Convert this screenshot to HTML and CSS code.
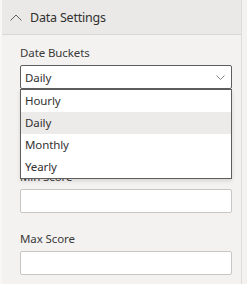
FILE: index.html
```html
<!DOCTYPE html>
<html>
<head>
    <title>Data Settings</title>
    <link rel="stylesheet" href="styles.css">
</head>
<body>
    <div class="panel">
        <div class="panel-header">
            <svg class="chevron-up" width="12" height="7" viewBox="0 0 12 7">
                <path d="M0.5 6.5 L6 1 L11.5 6.5" fill="none" stroke="#605e5c" stroke-width="1"/>
            </svg>
            <span class="panel-title">Data Settings</span>
        </div>
        <div class="panel-body">
            <div class="field">
                <label class="field-label">Date Buckets</label>
                <div class="select">
                    <span>Daily</span>
                    <svg class="chevron-down" width="9" height="5" viewBox="0 0 9 5">
                        <path d="M0.5 0.5 L4.5 4.5 L8.5 0.5" fill="none" stroke="#8a8886" stroke-width="1"/>
                    </svg>
                    <ul class="dropdown">
                        <li>Hourly</li>
                        <li class="selected">Daily</li>
                        <li>Monthly</li>
                        <li>Yearly</li>
                    </ul>
                </div>
            </div>
            <div class="field field-spaced">
                <label class="field-label">Min Score</label>
                <input type="text" class="text-input">
            </div>
            <div class="field">
                <label class="field-label">Max Score</label>
                <input type="text" class="text-input">
            </div>
        </div>
    </div>
</body>
</html>
```
FILE: styles.css
```css
body {
    margin: 0;
    background-color: #f3f2f1;
    font-family: "Segoe UI", "Noto Sans", sans-serif;
    color: #323130;
}
.panel {
    width: 242px;
    height: 284px;
    border-left: 2px solid #f8f7f6;
    border-right: 1px solid #dedcda;
    box-sizing: border-box;
}
.panel-header {
    height: 35px;
    background-color: #eae9e7;
    border-bottom: 1px solid #dad8d6;
    box-sizing: border-box;
    display: flex;
    align-items: center;
    padding-left: 8px;
}
.chevron-up {
    margin-right: 8px;
    margin-top: 1px;
}
.panel-title {
    font-size: 12.5px;
    letter-spacing: -0.2px;
    color: #323130;
}
.panel-body {
    padding: 6px 9px 0 18px;
}
.field {
    margin-bottom: 14px;
}
.field-spaced {
    margin-top: 76px;
}
.field-label {
    display: block;
    height: 24px;
    line-height: 24px;
    font-size: 11.5px;
    letter-spacing: -0.1px;
    color: #3b3a39;
}
.select {
    position: relative;
    height: 24px;
    border: 1px solid #605e5c;
    border-radius: 2px;
    box-sizing: border-box;
    background-color: white;
    display: flex;
    align-items: center;
    justify-content: space-between;
    padding: 0 6px 0 4px;
    font-size: 11.5px;
    letter-spacing: -0.1px;
}
.chevron-down {
    margin-top: 1px;
}
.dropdown {
    position: absolute;
    top: 23px;
    left: -1px;
    right: -1px;
    margin: 0;
    padding: 0;
    list-style: none;
    background-color: white;
    border: 1px solid #605e5c;
    box-shadow: 0 2px 4px rgba(0, 0, 0, 0.12);
}
.dropdown li {
    height: 22px;
    line-height: 22px;
    padding-left: 4px;
    font-size: 11.5px;
}
.dropdown li.selected {
    background-color: #edebe9;
}
.text-input {
    display: block;
    width: 100%;
    height: 24px;
    margin: 0;
    border: 1px solid #c8c6c4;
    border-radius: 2px;
    box-sizing: border-box;
    background-color: white;
}
```
